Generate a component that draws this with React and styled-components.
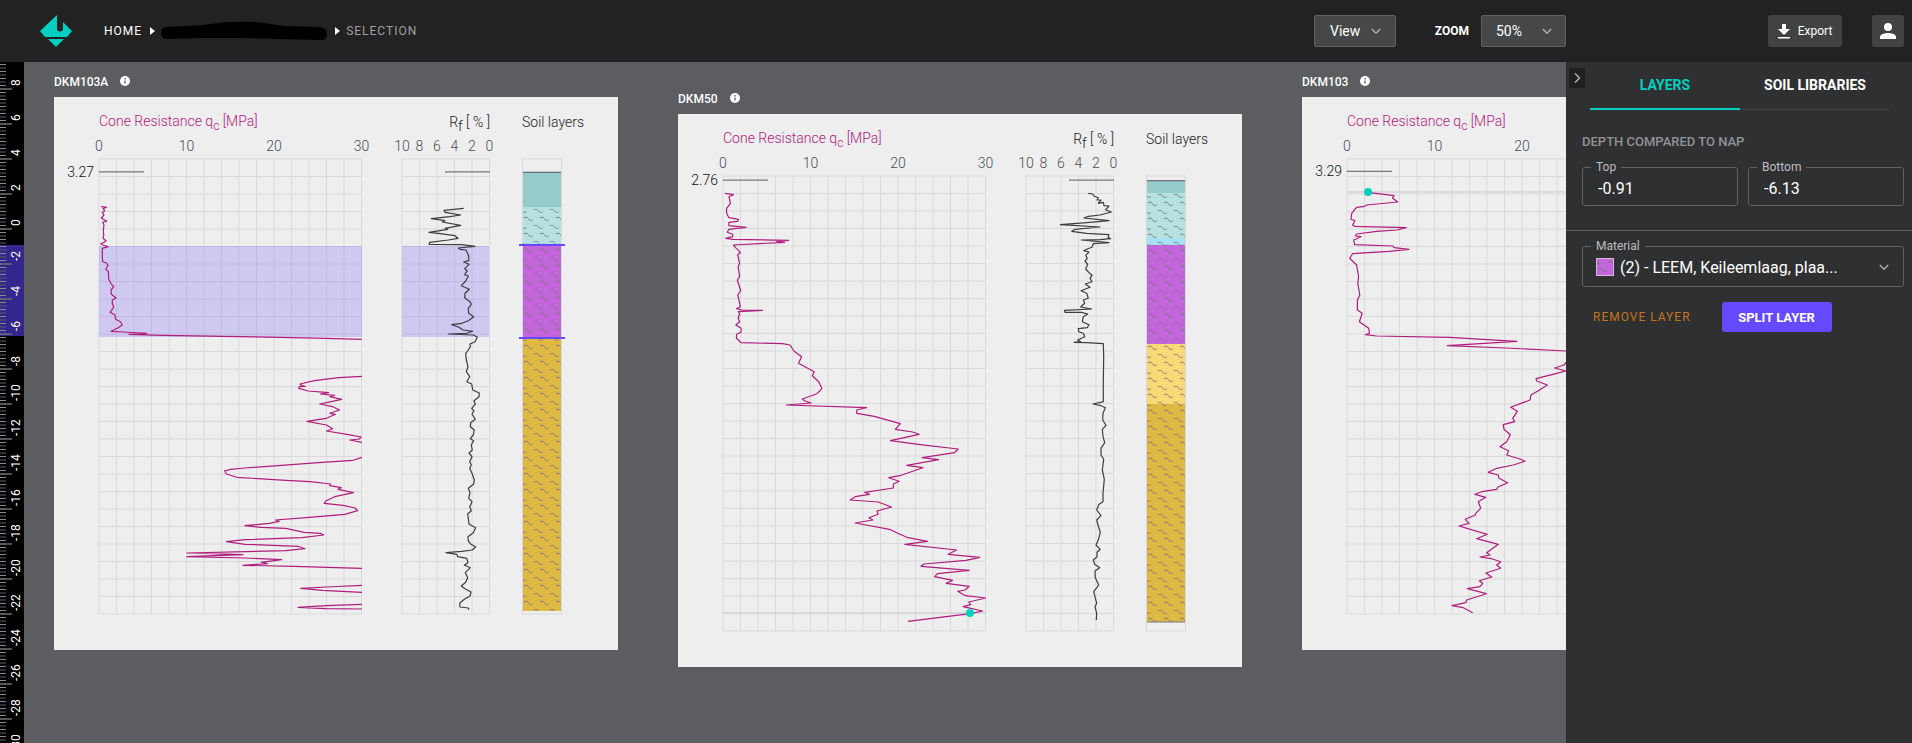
import React from "react";
import styled, { createGlobalStyle } from "styled-components";

const GlobalStyle = createGlobalStyle`
  *, *::before, *::after { box-sizing: border-box; }
  body { margin: 0; background: #5c5d61; }
  body, button, input, select { font-family: Roboto, "Liberation Sans", sans-serif; }
`;

const color = {
  teal: "#05cfbe",
  magenta: "#b01c7c",
  violet: "#6449ff",
  card: "#eeeeee",
};

/* ---------- page frame ---------- */

const Page = styled.div`
  display: grid;
  grid-template-rows: 62px minmax(0, 1fr);
  height: 100vh;
  color: #fff;
`;

const Header = styled.header`
  display: flex;
  align-items: center;
  padding: 0 8px 0 40px;
  background: #222222;
`;

const Workspace = styled.main`
  display: grid;
  grid-template-columns: 24px minmax(0, 1fr) 346px;
  min-height: 0;
`;

const Breadcrumbs = styled.nav`
  display: flex;
  align-items: center;
  margin-left: 32px;
  flex: 1;
`;

const Crumb = styled.a`
  font-size: 12px;
  line-height: 16px;
  letter-spacing: 1px;
  text-decoration: none;
  color: ${(p) => (p.$current ? "#a09fa6" : "#fff")};
`;

const CrumbArrow = styled.svg`
  margin: 0 6px 0 8px;
`;

const Toolbar = styled.div`
  display: grid;
  grid-template-columns: 252px 338px;
`;

const ToolGroup = styled.div`
  display: flex;
  align-items: center;
  justify-content: ${(p) => (p.$end ? "flex-end" : "space-between")};
  gap: 30px;
`;

const MenuButton = styled.button`
  display: flex;
  align-items: center;
  justify-content: space-between;
  width: 82px;
  height: 32px;
  padding: 0 14px 0 15px;
  border: 1px solid #606163;
  border-radius: 2px;
  background: #464749;
  color: #fff;
  font-size: 14px;
`;

const ZoomField = styled.label`
  display: flex;
  align-items: center;
  gap: 12px;
  font-size: 12px;
  font-weight: 700;
`;

const SelectBox = styled.span`
  display: flex;
  align-items: center;
  width: 85px;
  height: 32px;
  padding: 0 13px 0 14px;
  border: 1px solid #606163;
  border-radius: 2px;
  background: #464749;
`;

const BareSelect = styled.select`
  flex: 1;
  min-width: 0;
  padding: 0;
  border: 0;
  background: transparent;
  color: #fff;
  font-size: ${(p) => (p.$large ? "16px" : "14px")};
  appearance: none;
  outline: none;
  text-overflow: ellipsis;
`;

const DarkButton = styled.button`
  display: flex;
  align-items: center;
  justify-content: center;
  gap: 8px;
  width: ${(p) => (p.$square ? "32px" : "74px")};
  height: 32px;
  padding: 0;
  border: 0;
  border-radius: 3px;
  background: #414343;
  color: #fff;
  font-size: 12px;
`;

const Chevron = ({ right }) => (
  <svg width="10" height="10" viewBox="0 0 10 10" fill="none" stroke="#a9aaac" strokeWidth="1.6" aria-hidden="true">
    <path d={right ? "M3 .5 7.5 5 3 9.5" : "M.8 3 5 7.2 9.2 3"} />
  </svg>
);

/* ---------- canvas ---------- */

const Canvas = styled.section`
  display: flex;
  align-items: flex-start;
  gap: 60px;
  padding: 10px 0 0 30px;
  background: #5c5d61;
  overflow: hidden;
`;

const Sounding = styled.article`
  flex: 0 0 564px;
  margin-top: ${(p) => (p.$lowered ? "17px" : "0")};
`;

const SoundingTitle = styled.h2`
  display: flex;
  align-items: center;
  gap: 11px;
  margin: 0 0 5px;
  font-size: 12px;
  line-height: 20px;
  font-weight: 500;
`;

const Sheet = styled.div`
  background: ${color.card};

  svg { display: block; }
  text { font-size: 14px; font-weight: 300; }
`;

const RulerStrip = styled.aside`
  background: #000;
  overflow: hidden;

  svg { display: block; }
  text { font-size: 12px; fill: #fff; }
`;

/* ---------- side panel ---------- */

const Panel = styled.aside`
  display: flex;
  flex-direction: column;
  background: #2f3032;
  overflow: hidden;
`;

const TabBar = styled.div`
  display: flex;
  align-items: flex-start;
  gap: 5px;
  padding: 6px 22px 0 3px;
`;

const CollapseButton = styled.button`
  display: flex;
  align-items: center;
  justify-content: center;
  width: 16px;
  height: 20px;
  padding: 0;
  border: 0;
  background: #1f2021;
`;

const Tabs = styled.div`
  display: flex;
  flex: 1;
  box-shadow: inset 0 -1px #404143;
`;

const Tab = styled.button`
  flex: 1;
  height: 42px;
  padding: 0 0 6px;
  border: 0;
  border-bottom: 2px solid ${(p) => (p.$active ? color.teal : "transparent")};
  background: none;
  color: ${(p) => (p.$active ? color.teal : "#fff")};
  font-size: 14px;
  line-height: 20px;
  font-weight: 700;
`;

const Section = styled.section`
  padding: ${(p) => (p.$divided ? "8px" : "24px")} 8px 24px 16px;
  border-top: ${(p) => (p.$divided ? "1px solid #5f6062" : "0")};
`;

const SectionTitle = styled.h3`
  margin: 0 0 10px;
  color: #929395;
  font-size: 13px;
  line-height: 16px;
  font-weight: 500;
`;

const FieldRow = styled.div`
  display: grid;
  grid-template-columns: 1fr 1fr;
  gap: 10px;
`;

const Field = styled.fieldset`
  display: block;
  min-width: 0;
  height: ${(p) => (p.$tall ? "48px" : "46px")};
  margin: 0;
  padding: 0 14px 0 8px;
  border: 1px solid #606163;
  border-radius: 3px;

  legend {
    padding: 0 5px;
    color: #bdbec0;
    font-size: 12px;
    line-height: 14px;
  }
`;

const FieldBody = styled.div`
  display: flex;
  align-items: center;
  gap: 6px;
  height: 28px;
  padding-left: ${(p) => (p.$tall ? "5px" : "7px")};
`;

const NumberInput = styled.input`
  width: 100%;
  padding: 0;
  border: 0;
  background: transparent;
  color: #fff;
  font-size: 16px;
  outline: none;
`;

const Actions = styled.div`
  display: flex;
  align-items: center;
  gap: 20px;
  padding: 15px 0 0;
`;

const TextButton = styled.button`
  height: 30px;
  padding: 0 11px;
  border: 0;
  background: none;
  color: #c4741a;
  font-size: 12px;
  letter-spacing: 1px;
`;

const PrimaryButton = styled.button`
  width: 110px;
  height: 30px;
  padding: 0;
  border: 0;
  border-radius: 3px;
  background: ${color.violet};
  color: #fff;
  font-size: 13px;
  font-weight: 700;
`;

/* ---------- sounding data ---------- */

// Turns "x,y x,y" samples into sheet coordinates: divide by the step, then shift.
const samples = (stepX, shiftX, stepY, shiftY, text) =>
  text.trim().split(/\s+/).map((pair) => {
    const [x, y] = pair.split(",").map(Number);
    return [x / stepX + shiftX, y / stepY + shiftY];
  });

const SOUNDINGS = [
  {
    name: "DKM103A",
    surface: 3.27,
    top: 4,
    cone: [
      samples(3, 26, 3, 3, "64,320 80,322 69,326 74,332 67,338 72,345 64,354 74,360 80,364 68,366 72,375 70,390 71,405 69,415 78,422 72,427 62,431 70,435 85,440 67,445 67,470 68,485 80,489 84,497 77,507 85,515 86,537 92,550 101,560 93,570 94,583 108,594 97,600 97,610 101,622 90,637 105,645 107,658 122,666 127,675 115,683 93,694 130,696 200,700 147,703 250,706 430,709 600,712 740,715 845,718"),
      samples(2.45, -54, 3, 143, "887,409 830,413 770,422 735,432 740,437 748,439 733,440 732,445 755,453 805,458 785,462 820,466 808,470 837,478 800,488 783,492 815,500 832,510 808,520 822,523 800,535 752,544 800,555 815,566 800,573 850,583 885,591 880,597 857,600 887,607"),
      [
        ...samples(2.45, -54, 3, 143, "887,652 865,661 780,668 690,676 600,684 565,688 550,693 555,702 580,712 700,721"),
        ...samples(2.45, -54, 3, 383, "760,5 810,12 808,17 836,23 828,28 866,38 820,50 798,63 794,70 840,76 870,84 876,92 845,103 750,113 675,120 684,124 660,130 600,137 640,142 700,145 745,157 785,160 793,165 740,173 600,179 555,185 600,193 730,199 747,206 700,212 458,219 595,224 458,230 600,234 690,239 640,247 655,251 595,256 720,259 887,265"),
      ],
      samples(2.45, -54, 3, 383, "887,316 800,321 737,325 790,331 887,337"),
      samples(2.45, -54, 3, 383, "887,373 800,377 730,382 800,386 887,387"),
    ],
    friction: [
      samples(3, 341, 3, 53, "206,175 147,181 150,187 197,195 165,200 109,206 150,212 142,216 197,226 150,235 158,238 102,247 130,250 180,257 189,265 160,270 104,277 102,283 200,284 240,289 190,294 195,298 213,300 221,317 221,332 206,336 222,343 209,356 217,362 209,374 220,378 212,393 199,407 223,418 210,430 209,443 225,455 229,463 220,475 221,490 236,500 220,512 200,520 170,524 190,531 205,540 233,544 215,550 160,552 235,555 247,561 240,575 225,582 226,590 220,600 212,610 214,630 219,650 214,665 224,680 215,695 230,702 233,720 253,729 252,740 237,752 241,763 230,775 237,783 231,792 241,808 227,818 226,830 238,840 235,855 226,866 236,872 229,885 232,900 222,909 231,920 224,935 229,945 224,955 232,972 238,990 236,1002 220,1015 225,1028 221,1045 231,1055 224,1070 229,1082 218,1092 220,1105 222,1122 242,1133 235,1148 219,1160 220,1173 228,1183 242,1191 232,1200 200,1204 153,1208 185,1213 188,1220 215,1225 219,1238 208,1245 226,1253 211,1268 218,1283 212,1297 199,1308 210,1316 228,1326 225,1338 208,1348 194,1360 195,1371 220,1374 222,1379"),
    ],
    layers: [
      { from: 75, to: 110, fill: "#94cbcb", plain: true },
      { from: 110, to: 148, fill: "#b6e1e1" },
      { from: 148, to: 241, fill: "#c366db" },
      { from: 241, to: 514, fill: "#dfb944" },
    ],
    selection: [148, 241],
  },
  {
    name: "DKM50",
    surface: 2.76,
    top: 3,
    lowered: true,
    cone: [
      [
        ...samples(2.6133, -18, 3, -34, "170,340 192,344 180,350 184,370 174,385 174,400 180,413 205,418 203,424 180,427 180,437 225,442 180,448 176,457 190,463 190,470 172,475 190,478 336,481 305,484 325,487 192,495 197,502 210,517 203,525 208,550 204,560 208,590 202,600 211,632 203,645 210,680 200,686 215,690 268,691 205,695 208,702 204,715 208,725 198,735 212,745 212,757 200,763 200,775 212,788 320,791 340,795 348,810"),
        ...samples(2.6133, -18, 3, 236, "350,3 370,20 362,40 403,65 398,77 415,95 423,116 410,131 372,147 378,152 395,159 330,165 540,173 514,180 514,190 560,199 628,221 615,238 660,246 677,253 602,272 680,284 779,297 770,308 685,323 728,329 645,346 687,353 630,376 598,383 625,394 610,402 610,414 535,427 547,433 510,440 497,450 570,456 605,471 567,483 570,493 546,503 556,510 510,519 600,538 620,549 645,562 699,574 640,583 775,600 753,613 836,622 800,631 690,642 682,649 808,661 725,671 718,680 765,691 748,700 808,709 797,720 778,724 798,737 852,744 807,756 812,764 792,770 843,783 811,791 648,814"),
      ],
    ],
    friction: [
      samples(3, 342, 3, 56, "205,70 218,72 222,78 235,83 231,90 243,90 235,100 250,97 252,107 267,108 257,119 274,126 240,135 205,139 192,144 267,152 200,158 121,164 240,171 165,178 155,184 200,190 267,194 264,202 272,206 240,209 184,210 267,218 220,221 216,232 203,236 191,242 207,246 197,256 202,265 195,273 203,283 197,297 209,310 216,316 210,325 216,335 196,342 210,352 183,362 200,370 205,385 190,390 194,400 182,411 215,417 133,421 135,427 185,427 203,432 190,440 187,455 207,464 202,473 175,476 176,485 190,490 194,500 173,510 182,515 162,517 200,518 250,521 251,560 250,640 250,695 219,702 240,706 256,713 249,730 248,750 258,766 247,778 249,800 254,818 243,835 243,855 251,868 247,900 253,928 249,970 249,995 237,1003 230,1020 243,1037 230,1050 235,1068 241,1087 235,1110 228,1125 241,1138 231,1147 231,1160 220,1170 224,1183 239,1193 225,1203 226,1223 236,1245 221,1265 230,1300 225,1310 230,1330 229,1350"),
    ],
    layers: [
      { from: 67, to: 79, fill: "#94cbcb", plain: true },
      { from: 79, to: 124, fill: "#b6e1e1" },
      { from: 124, to: 131, fill: "#a5e0f3" },
      { from: 131, to: 230, fill: "#c366db" },
      { from: 230, to: 290, fill: "#f8d978" },
      { from: 290, to: 508, fill: "#dfb944" },
    ],
    marker: [292, 499],
  },
  {
    name: "DKM103",
    surface: 3.29,
    top: 4,
    cone: [
      samples(2.481, -22, 3, -97, "218,577 283,587 279,594 292,606 215,615 210,619 190,622 178,640 176,658 186,662 180,675 185,679 313,683 290,690 240,694 190,702 187,708 201,710 183,720 185,734 280,738 283,743 320,748 270,754 180,761 173,775 190,795 195,830 193,850 198,885 192,900 192,930 204,940 197,965 220,985 222,1000 212,1004 240,1008 420,1012 588,1024 415,1037 560,1044 710,1053 760,1057"),
      samples(3, -22, 3, 233, "860,95 852,105 824,114 857,123 830,130 768,146 770,153 802,165 775,182 753,195 750,210 692,232 712,244 698,265 704,275 670,284 672,298 691,314 680,335 660,350 686,362 680,375 720,387 735,394 700,405 650,415 625,427 655,435 657,445 683,458 653,472 650,478 605,485 585,493 617,502 595,515 602,535 587,550 586,555 556,568 567,580 537,588 622,613 590,626 655,643 620,668 630,675 600,681 635,686 662,695 650,705 662,715 618,729 635,741 598,752 608,760 600,770 562,776 619,791 560,810 557,818 516,827 550,833 578,848"),
    ],
    friction: [],
    layers: [],
    marker: [66, 95],
  },
];

/* ---------- chart ---------- */

const CELL = 17.5;
const ROWS = 26;
const PLOT_TOP = 62;
const PLOT_HEIGHT = ROWS * CELL;

const Squiggle = ({ x, y }) => (
  <path
    d={`M${x} ${y - 1}c1.5-1.4 3.2-.9 4.4.7s2.700 2.700 4.300.9`}
    fill="none"
    stroke="#73757c"
  />
);

const Grid = ({ x, columns }) => {
  const lines = [];
  for (let c = 0; c <= columns; c++) {
    lines.push(`M${x + c * CELL} ${PLOT_TOP}v${PLOT_HEIGHT}`);
  }
  for (let r = 0; r <= ROWS; r++) {
    lines.push(`M${x} ${PLOT_TOP + r * CELL}h${columns * CELL}`);
  }
  return <path d={lines.join("")} stroke="#dadadc" fill="none" />;
};

const AxisLabels = ({ x, step, values }) =>
  values.map((value, i) => (
    <text key={value} x={x + i * step} y="54" textAnchor="middle" fill="#4c4d50">
      {value}
    </text>
  ));

const Curve = ({ points, stroke }) => (
  <polyline
    points={points.map(([x, y]) => `${x.toFixed(1)},${y.toFixed(1)}`).join(" ")}
    fill="none"
    stroke={stroke}
    strokeWidth="1.2"
    strokeLinejoin="round"
  />
);

function Chart({ data }) {
  const id = data.name;
  const surfaceY = PLOT_TOP + (data.top - data.surface) * CELL;
  const last = data.layers[data.layers.length - 1];
  return (
    <svg width="564" height="553" viewBox="0 0 564 553" role="img" aria-label={`Sounding ${id}`}>
      <defs>
        <pattern id={`soil-${id}`} width="16" height="16" patternUnits="userSpaceOnUse">
          <Squiggle x={0} y={2} />
          <Squiggle x={6} y={10} />
        </pattern>
        <clipPath id={`cone-${id}`}>
          <rect x="45" y={PLOT_TOP} width="263" height={PLOT_HEIGHT} />
        </clipPath>
      </defs>

      <text x="45" y="29" fill={color.magenta}>
        Cone Resistance q<tspan dy="4" fontSize="12">c</tspan>
        <tspan dy="-4"> [MPa]</tspan>
      </text>
      <text x="436" y="30" textAnchor="end" fill="#222">
        R<tspan dy="4">f</tspan>
        <tspan dy="-4"> [ % ]</tspan>
      </text>
      <text x="468" y="30" fill="#222">Soil layers</text>

      <AxisLabels x={45} step={5 * CELL} values={[0, 10, 20, 30]} />
      <AxisLabels x={348} step={CELL} values={[10, 8, 6, 4, 2, 0]} />

      <Grid x={45} columns={15} />
      <Grid x={348} columns={5} />

      <text x="40" y={surfaceY + 5} textAnchor="end" fill="#111">{data.surface}</text>
      <path d={`M45 ${surfaceY}h45M391 ${surfaceY}h45`} stroke="#77787b" strokeWidth="1.2" />

      {data.marker && (
        <path d={`M45 ${data.marker[1]}h263`} stroke="#cbcbcd" />
      )}
      {data.selection && (
        <g fill={color.violet} fillOpacity="0.22">
          <rect x="45" y={data.selection[0] + 1} width="263" height="91" />
          <rect x="348" y={data.selection[0] + 1} width="87" height="91" />
        </g>
      )}

      <g clipPath={`url(#cone-${id})`}>
        {data.cone.map((points, i) => (
          <Curve key={i} points={points} stroke={color.magenta} />
        ))}
      </g>
      {data.friction.map((points, i) => (
        <Curve key={i} points={points} stroke="#3c3d40" />
      ))}

      <rect x="468.5" y={PLOT_TOP} width="39" height={PLOT_HEIGHT} fill="none" stroke="#d9d9db" />
      {data.layers.map((layer) => (
        <g key={layer.from}>
          <rect x="469" y={layer.from} width="38" height={layer.to - layer.from} fill={layer.fill} />
          {!layer.plain && (
            <rect x="469" y={layer.from} width="38" height={layer.to - layer.from} fill={`url(#soil-${id})`} />
          )}
        </g>
      ))}
      {last && <path d={`M469 ${surfaceY + 0.5}h38`} stroke="#55565a" />}
      {last && !data.selection && <path d={`M469 ${last.to}h38`} stroke="#77787b" />}
      {data.selection &&
        data.selection.map((y) => <path key={y} d={`M465 ${y}h46`} stroke={color.violet} strokeWidth="2" />)}
      {data.marker && <circle cx={data.marker[0]} cy={data.marker[1]} r="4" fill={color.teal} />}
    </svg>
  );
}

/* Level ruler: a short mark every 0.2 m, a long one with its label every 2 m. */
function Ruler() {
  const levelY = (level) => 97 + (4 - level) * CELL;
  const marks = [];
  for (let i = 0; i < 240; i++) {
    const level = 10 - i * 0.2;
    marks.push(<path key={i} d={`M0 ${levelY(level)}h6`} stroke={i % 2 ? "#8b8b8f" : "#5d5d60"} />);
  }
  const labels = [];
  for (let level = 8; level >= -30; level -= 2) {
    const y = levelY(level);
    labels.push(
      <g key={level}>
        <path d={`M0 ${y}h12`} stroke="#6c6c70" strokeWidth="1.5" />
        <text transform={`translate(20 ${y - 3}) rotate(-90)`}>{level}</text>
      </g>
    );
  }
  return (
    <svg width="24" height="840" viewBox="0 0 24 840" role="img" aria-label="Level ruler">
      <rect y="183" width="24" height="91" fill="#33268c" />
      {marks}
      {labels}
    </svg>
  );
}

const Logo = () => (
  <svg width="32" height="32" viewBox="0 0 32 32" fill={color.teal} role="img" aria-label="Logo">
    <path d="M17 0v13.500a2.800 2.800 0 0 0 6 0V7l9 9-5 6H5l-5-6z" />
    <path d="M8 24h16l-8 8z" />
  </svg>
);

const Arrow = () => (
  <CrumbArrow width="5" height="10" viewBox="0 0 5 10" fill="#fff" aria-hidden="true">
    <path d="M0 1 5 5 0 9z" />
  </CrumbArrow>
);

const Scribble = () => (
  <svg width="166" height="20" viewBox="0 0 166 20" role="img" aria-label="Project name">
    <path d="M5 6 42 4C60 1 75 0 95 1c12 1 18 3 28 4l35 1c6 0 8 4 8 7 0 4-2 6-6 6l-45-1c-25-1-55-1-75-1l-34 1c-4 0-6-3-6-6s2-6 5-6z" />
  </svg>
);

const InfoIcon = () => (
  <svg width="12" height="12" viewBox="0 0 12 12" aria-hidden="true">
    <circle cx="6" cy="5" r="5" fill="#fff" />
    <path d="M6 2v1.500M6 4.500v3" stroke="#5c5d61" strokeWidth="1.3" />
  </svg>
);

export default function App() {
  return (
    <>
      <GlobalStyle />
      <Page>
        <Header>
          <Logo />
          <Breadcrumbs aria-label="Breadcrumb">
            <Crumb href="#home">HOME</Crumb>
            <Arrow />
            <Scribble />
            <Arrow />
            <Crumb href="#selection" $current aria-current="page">SELECTION</Crumb>
          </Breadcrumbs>
          <Toolbar>
            <ToolGroup>
              <MenuButton type="button">View<Chevron /></MenuButton>
              <ZoomField>
                ZOOM
                <SelectBox>
                  <BareSelect defaultValue="50%"><option>50%</option></BareSelect>
                  <Chevron />
                </SelectBox>
              </ZoomField>
            </ToolGroup>
            <ToolGroup $end>
              <DarkButton type="button">
                <svg width="12" height="15" viewBox="0 0 12 15" fill="#fff" aria-hidden="true">
                  <path d="M4 0h4v5h4l-6 6-6-6h4zM0 13h12v1.500H0z" />
                </svg>
                Export
              </DarkButton>
              <DarkButton type="button" $square aria-label="Account">
                <svg width="16" height="16" viewBox="0 0 16 16" fill="#fff" aria-hidden="true">
                  <circle cx="8" cy="4" r="4" />
                  <path d="M0 16v-2c0-3 5-4 8-4s8 1 8 4v2z" />
                </svg>
              </DarkButton>
            </ToolGroup>
          </Toolbar>
        </Header>

        <Workspace>
          <RulerStrip><Ruler /></RulerStrip>

          <Canvas>
            {SOUNDINGS.map((data) => (
              <Sounding key={data.name} $lowered={data.lowered}>
                <SoundingTitle>{data.name}<InfoIcon /></SoundingTitle>
                <Sheet><Chart data={data} /></Sheet>
              </Sounding>
            ))}
          </Canvas>

          <Panel>
            <TabBar>
              <CollapseButton type="button" aria-label="Collapse panel"><Chevron right /></CollapseButton>
              <Tabs role="tablist">
                <Tab type="button" role="tab" aria-selected="true" $active>LAYERS</Tab>
                <Tab type="button" role="tab" aria-selected="false">SOIL LIBRARIES</Tab>
              </Tabs>
            </TabBar>

            <Section>
              <SectionTitle>DEPTH COMPARED TO NAP</SectionTitle>
              <FieldRow>
                <Field>
                  <legend><label htmlFor="top">Top</label></legend>
                  <FieldBody><NumberInput id="top" defaultValue="-0.91" /></FieldBody>
                </Field>
                <Field>
                  <legend><label htmlFor="bottom">Bottom</label></legend>
                  <FieldBody><NumberInput id="bottom" defaultValue="-6.13" /></FieldBody>
                </Field>
              </FieldRow>
            </Section>

            <Section $divided>
              <Field $tall>
                <legend><label htmlFor="material">Material</label></legend>
                <FieldBody $tall>
                  <svg width="18" height="18" viewBox="0 0 18 18" aria-hidden="true">
                    <rect x=".5" y=".5" width="17" height="17" fill="#c366db" stroke="#d9b3dc" />
                    <Squiggle x={2} y={12} />
                    <path d="M1 5q2 2 4 0M12 4.500q2-2.500 5 0" fill="none" stroke="#73757c" />
                  </svg>
                  <BareSelect id="material" $large defaultValue="(2) - LEEM, Keileemlaag, plaa...">
                    <option>(2) - LEEM, Keileemlaag, plaa...</option>
                  </BareSelect>
                  <Chevron />
                </FieldBody>
              </Field>
              <Actions>
                <TextButton type="button">REMOVE LAYER</TextButton>
                <PrimaryButton type="button">SPLIT LAYER</PrimaryButton>
              </Actions>
            </Section>
          </Panel>
        </Workspace>
      </Page>
    </>
  );
}
